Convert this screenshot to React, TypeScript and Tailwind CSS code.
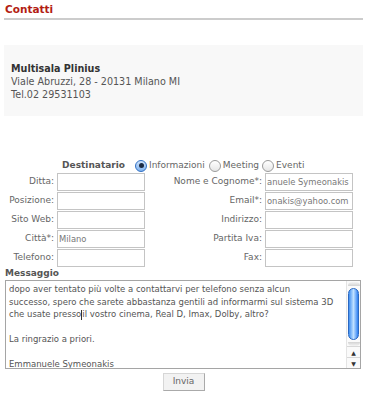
import React from "react";

const leftFields = [
    { label: "Ditta:", value: "" },
    { label: "Posizione:", value: "" },
    { label: "Sito Web:", value: "" },
    { label: "Città*:", value: "Milano" },
    { label: "Telefono:", value: "" },
];

const rightFields = [
    { label: "Nome e Cognome*:", value: "anuele Symeonakis" },
    { label: "Email*:", value: "onakis@yahoo.com" },
    { label: "Indirizzo:", value: "" },
    { label: "Partita Iva:", value: "" },
    { label: "Fax:", value: "" },
];

function Radio({ checked }: { checked?: boolean }) {
    return (
        <span
            className={
                checked
                    ? "inline-flex items-center justify-center w-[12px] h-[12px] rounded-full border border-[#2f6fc4] bg-gradient-to-b from-[#cfe3fb] to-[#7fb2ee]"
                    : "inline-flex items-center justify-center w-[12px] h-[12px] rounded-full border border-[#9a9a9a] bg-gradient-to-b from-[#ffffff] to-[#e6e6e6]"
            }
        >
            {checked && <span className="w-[5px] h-[5px] rounded-full bg-[#1c2b44]" />}
        </span>
    );
}

function Field({ value }: { value: string }) {
    return (
        <div className="w-[88px] h-[18px] border border-[#c4c4c4] bg-white pl-[1px] text-[8.4px] leading-[16px] text-[#777] overflow-hidden whitespace-nowrap">
            {value}
        </div>
    );
}

export default function App() {
    const lines = [
        "dopo aver tentato più volte a contattarvi per telefono senza alcun",
        "successo, spero che sarete abbastanza gentili ad informarmi sul sistema 3D",
        "",
        "",
        "La ringrazio a priori.",
        "",
        "Emmanuele Symeonakis",
    ];

    return (
        <div className="w-[367px] h-[400px] bg-white font-['DejaVu_Sans',Verdana,sans-serif] overflow-hidden">
            {/* Titolo */}
            <div className="mx-[4px] border-b-2 border-[#cccccc] pt-[3px] h-[20px]">
                <h1 className="pl-[1px] text-[10.5px] leading-[13px] font-bold text-[#b31d13]">Contatti</h1>
            </div>

            {/* Indirizzo cinema */}
            <div className="mx-[4px] mt-[25px] h-[71px] bg-[#f8f8f8] px-[7px] pt-[17px] text-[9.6px] leading-[13px] text-[#555]">
                <p className="font-bold text-[#333]">Multisala Plinius</p>
                <p>Viale Abruzzi, 28 - 20131 Milano MI</p>
                <p>Tel.02 29531103</p>
            </div>

            {/* Form */}
            <div className="mt-[42px] text-[9px] text-[#666]">
                <div className="flex items-center h-[15px]">
                    <span className="w-[126px] text-right font-bold text-[#555] pr-[1px]">Destinatario</span>
                    <span className="ml-[9px] flex items-center gap-[2px]">
                        <Radio checked />
                        <span>Informazioni</span>
                    </span>
                    <span className="ml-[4px] flex items-center gap-[2px]">
                        <Radio />
                        <span>Meeting</span>
                    </span>
                    <span className="ml-[3px] flex items-center gap-[2px]">
                        <Radio />
                        <span>Eventi</span>
                    </span>
                </div>

                <div className="flex flex-col gap-[1px]">
                    {leftFields.map((f, i) => (
                        <div key={f.label} className="flex items-center h-[18px]">
                            <span className="w-[55px] text-right pr-[1px]">{f.label}</span>
                            <span className="ml-[2px]">
                                <Field value={f.value} />
                            </span>
                            <span className="w-[118px] text-right pr-[1px]">{rightFields[i].label}</span>
                            <span className="ml-[2px]">
                                <Field value={rightFields[i].value} />
                            </span>
                        </div>
                    ))}
                </div>

                {/* Messaggio */}
                <p className="pl-[5px] font-bold text-[#555] leading-[12px]">Messaggio</p>
                <div className="ml-[5px] mt-[1px] w-[356px] h-[89px] border border-[#a5a5a5] bg-white flex">
                    <div className="flex-1 pl-[3px] pt-[2px] text-[8.5px] leading-[12.5px] text-[#555] whitespace-nowrap overflow-hidden">
                        <div>{lines[0]}</div>
                        <div>{lines[1]}</div>
                        <div>
                            che usate presso<span className="inline-block w-px h-[10px] bg-[#333] align-middle" />il vostro cinema, Real D, Imax, Dolby, altro?
                        </div>
                        <div className="h-[12.5px]" />
                        <div>{lines[4]}</div>
                        <div className="h-[12.5px]" />
                        <div>{lines[6]}</div>
                    </div>
                    {/* Barra di scorrimento */}
                    <div className="w-[14px] flex flex-col items-center border-l border-[#e4e4e4] bg-[#fafafa]">
                        <div className="mt-[1px] w-[12px] h-[4px] rounded-t-full bg-gradient-to-b from-[#f4f4f4] to-[#d2d2d2]" />
                        <div className="mt-[2px] w-[11px] h-[52px] rounded-full border border-[#2a68c2] bg-gradient-to-r from-[#3f8ff0] via-[#bfe0ff] to-[#2b7ff0]" />
                        <div className="mt-[2px] w-[12px] h-[4px] rounded-b-full bg-gradient-to-b from-[#d2d2d2] to-[#f4f4f4]" />
                        <div className="flex-1" />
                        <div className="w-full h-[11px] flex items-center justify-center border-t border-[#d8d8d8] text-[6px] text-[#333]">▲</div>
                        <div className="w-full h-[11px] flex items-center justify-center border-t border-[#d8d8d8] text-[6px] text-[#333]">▼</div>
                    </div>
                </div>

                <div className="mt-[4px] flex justify-center">
                    <button className="w-[42px] h-[18px] bg-[#f2f2f2] border border-[#d6d6d6] border-b-[#aaa] border-r-[#aaa] text-[9px] text-[#666]">
                        Invia
                    </button>
                </div>
            </div>
        </div>
    );
}
